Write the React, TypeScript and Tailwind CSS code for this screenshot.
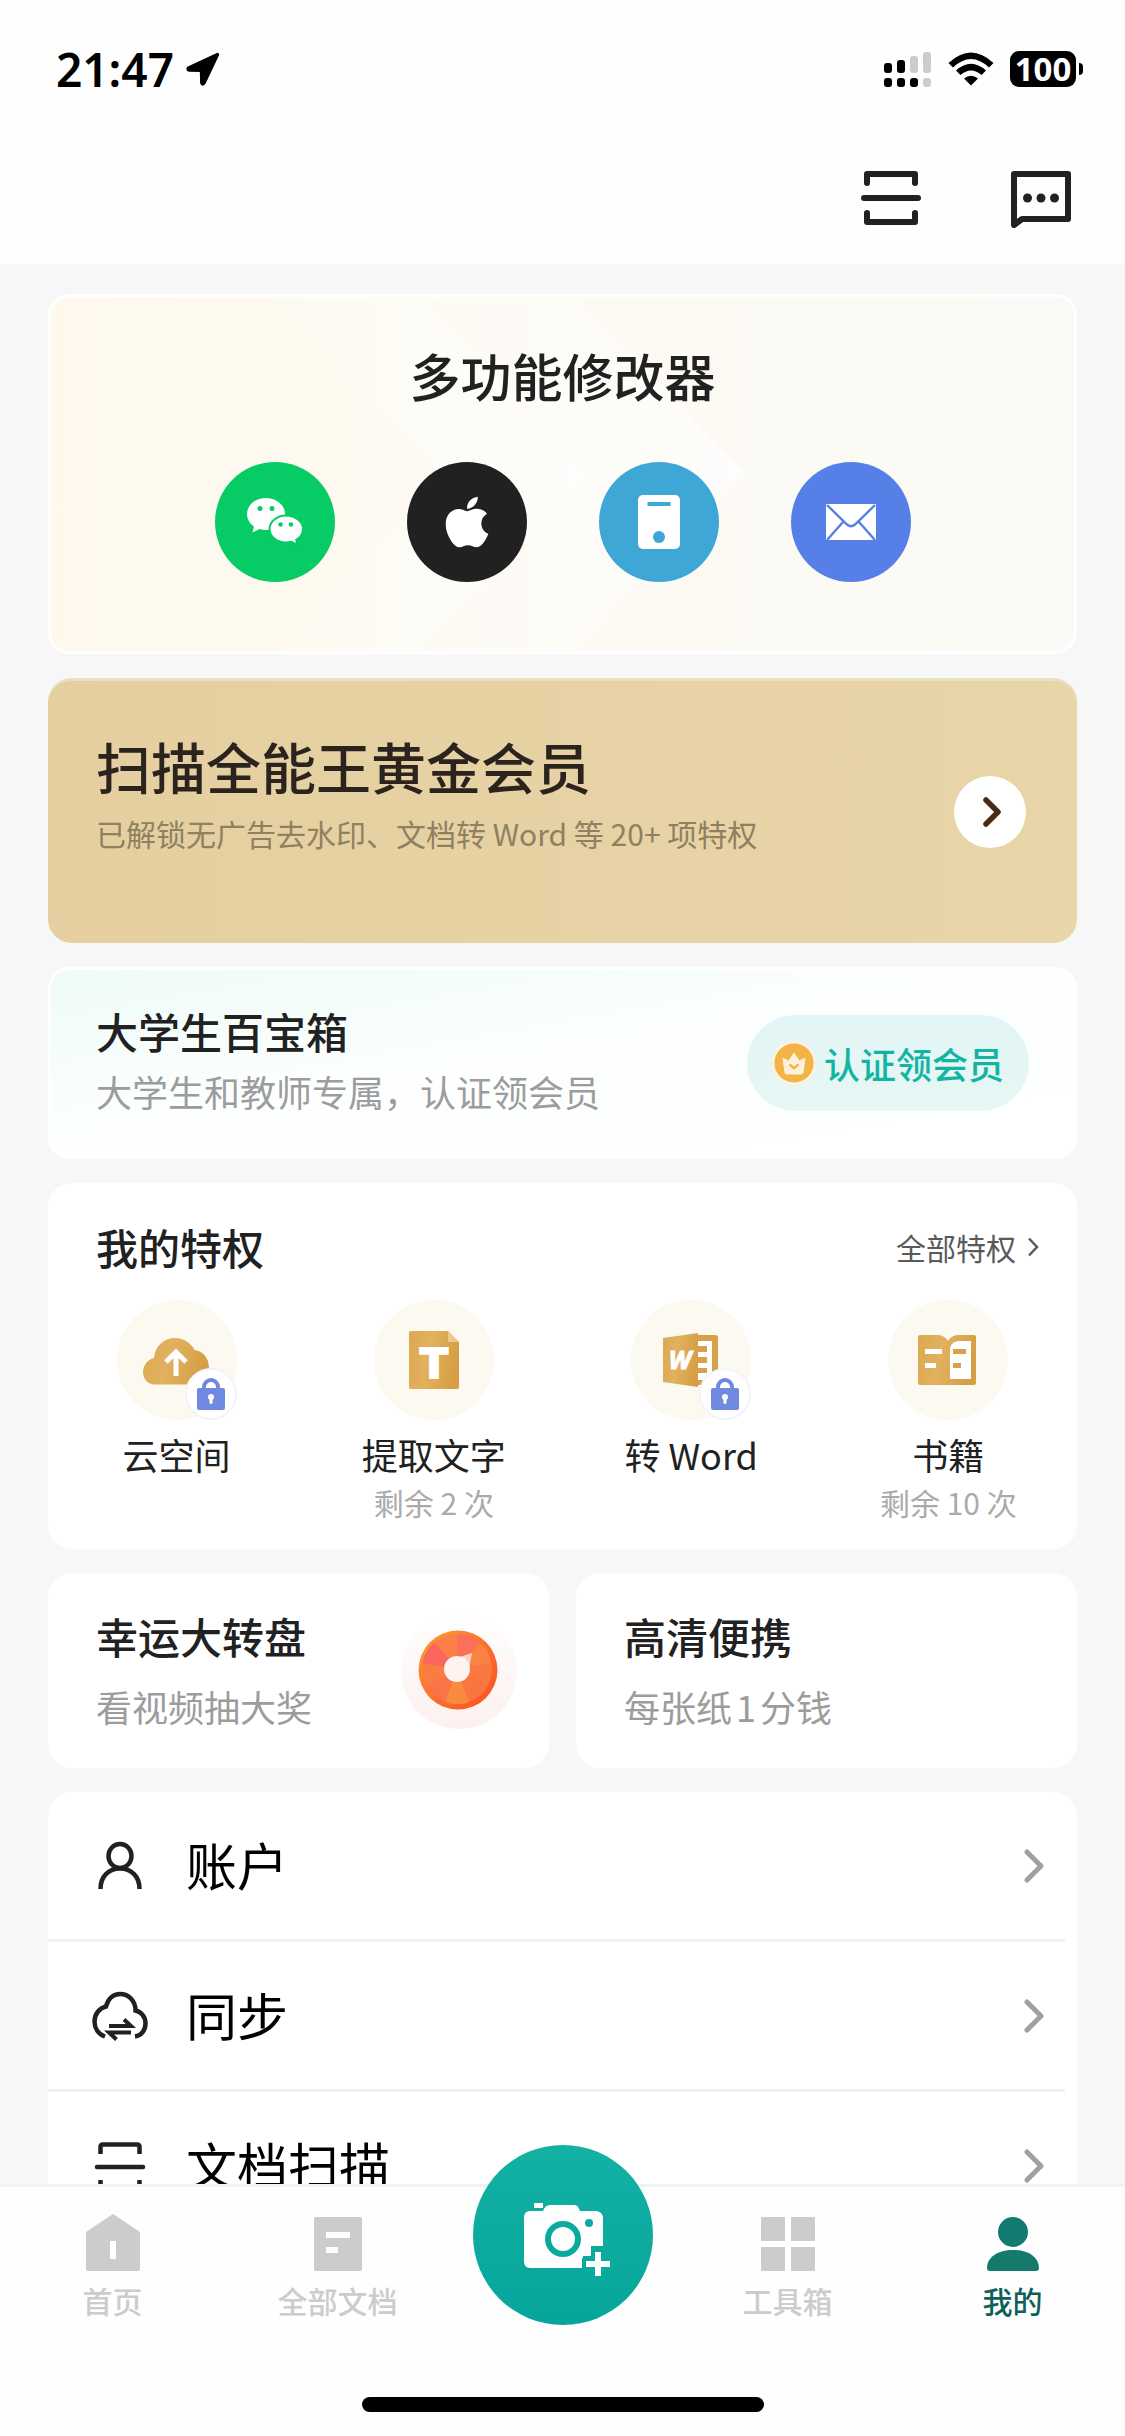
import type { ReactNode } from "react";
import { FaApple } from "react-icons/fa";

function LocationArrow() {
  return (
    <svg viewBox="0 0 36 36" className="h-9 w-9" aria-hidden="true">
      <path
        d="M32.5 3.5 L3.5 17 Q2.5 18.5 4 19 L16.5 19.3 L16.8 32 Q17.8 34 19 32 Z"
        fill="#000"
        stroke="#000"
        strokeWidth="3.4"
        strokeLinejoin="round"
      />
    </svg>
  );
}

function SignalIcon() {
  return (
    <svg viewBox="0 0 48 36" className="h-9 w-12" aria-hidden="true">
      <rect x="0" y="12" width="8" height="10" rx="3" fill="#000" />
      <rect x="13" y="9" width="8" height="13" rx="3" fill="#000" />
      <rect x="26" y="5" width="8" height="17" rx="3" fill="#ccc" />
      <rect x="39" y="1" width="8" height="21" rx="3" fill="#ccc" />
      <rect x="0" y="27" width="8" height="9" rx="3" fill="#000" />
      <rect x="13" y="27" width="8" height="9" rx="3" fill="#000" />
      <rect x="26" y="27" width="8" height="9" rx="3" fill="#000" />
      <rect x="39" y="27" width="8" height="9" rx="3" fill="#ccc" />
    </svg>
  );
}

function WifiIcon() {
  return (
    <svg viewBox="0 0 46 34" className="h-[34px] w-[46px]" aria-hidden="true">
      <path d="M0.5 11 Q23 -10 45.5 11 L41 15.5 Q23 -1.500 5 15.500 Z" fill="#000" />
      <path d="M8 18.500 Q23 5 38 18.500 L33.500 23 Q23 14 12.500 23 Z" fill="#000" />
      <path d="M16 26.500 Q23 21 30 26.500 L23 33.500 Z" fill="#000" />
    </svg>
  );
}

function StatusBar() {
  return (
    <div className="flex h-[138px] items-center justify-between pr-[42px] pl-[56px]">
      <div className="flex items-center gap-[11px]">
        <span className="font-['Noto_Sans'] text-[46px] leading-[46px] font-semibold text-black">21:47</span>
        <LocationArrow />
      </div>
      <div className="flex items-center gap-4">
        <SignalIcon />
        <WifiIcon />
        <div className="flex items-center gap-[3px]">
          <div className="flex h-9 w-[66px] items-center justify-center rounded-[9px] bg-black font-['Noto_Sans'] text-[33px] leading-9 font-bold text-white">
            100
          </div>
          <div className="h-3 w-1 rounded-r-full bg-black" />
        </div>
      </div>
    </div>
  );
}

function ScanIcon() {
  return (
    <svg viewBox="0 0 60 60" className="h-[60px] w-[60px]" fill="none" stroke="#212121" strokeWidth="6" aria-hidden="true">
      <path d="M6 15 V6 H54 V15 M6 45 V54 H54 V45" strokeLinejoin="round" strokeLinecap="round" />
      <path d="M3 30 H57" strokeLinecap="round" />
    </svg>
  );
}

function MessageIcon() {
  return (
    <svg viewBox="0 0 60 60" className="h-[60px] w-[60px]" aria-hidden="true">
      <path
        d="M3 6 H57 V51 H11 L3 57 Z"
        fill="none"
        stroke="#212121"
        strokeWidth="6"
        strokeLinejoin="round"
      />
      <circle cx="16.500" cy="30" r="4.500" fill="#212121" />
      <circle cx="30" cy="30" r="4.500" fill="#212121" />
      <circle cx="43.500" cy="30" r="4.500" fill="#212121" />
    </svg>
  );
}

function WechatIcon() {
  return (
    <svg viewBox="0 0 56 48" className="h-12 w-14" aria-hidden="true">
      <path d="M19 0 C8.500 0 0 7 0 16 C0 21 2.600 25.500 7 28.500 L5.500 34.500 L12.500 31 Q15.500 32 19 32 C29.500 32 38 25 38 16 S29.500 0 19 0 Z" fill="#fff" />
      <path
        d="M39 17.500 C30 17.500 22.500 23.700 22.500 31 C22.500 38.500 30 44.500 39 44.500 Q42 44.500 44.500 43.800 L50.500 47 L49.200 41.800 C53.500 39.300 56 35.500 56 31 C56 23.700 48.300 17.500 39 17.500 Z"
        fill="#fff"
        stroke="#07cb64"
        strokeWidth="2"
      />
      <circle cx="13" cy="10.500" r="2.500" fill="#07cb64" />
      <circle cx="25" cy="10.500" r="2.500" fill="#07cb64" />
      <circle cx="33.500" cy="26.500" r="2.200" fill="#07cb64" />
      <circle cx="44" cy="26.500" r="2.200" fill="#07cb64" />
    </svg>
  );
}

function PhoneIcon() {
  return (
    <svg viewBox="0 0 42 54" className="h-[54px] w-[42px]" aria-hidden="true">
      <rect width="42" height="54" rx="5" fill="#fff" />
      <rect x="9.500" y="7" width="23" height="4" fill="#3fa7d6" />
      <circle cx="21" cy="42" r="6" fill="#3fa7d6" />
    </svg>
  );
}

function MailIcon() {
  return (
    <svg viewBox="0 0 50 36" className="h-9 w-[50px]" aria-hidden="true">
      <rect width="50" height="36" fill="#fff" />
      <path d="M1 1 L21 20.500 Q25 24 29 20.500 L49 1 M1 36 L17 18 M49 36 L33 18" fill="none" stroke="#567fe8" strokeWidth="2.4" />
    </svg>
  );
}

function Contact({ label, className, children }: { label: string; className: string; children: ReactNode }) {
  return (
    <button type="button" aria-label={label} className={`flex h-[120px] w-[120px] items-center justify-center rounded-full text-white ${className}`}>
      {children}
    </button>
  );
}

function FeatureCard() {
  return (
    <section className="relative overflow-hidden rounded-[21px] border-[3px] border-white bg-linear-to-r from-[#fef9ec] via-[#fdfaf3] to-[#fbfaf6] pt-12 pb-[69px]">
      <svg viewBox="0 0 1023 354" preserveAspectRatio="none" className="absolute inset-0 h-full w-full" aria-hidden="true">
        <defs>
          <linearGradient id="ray" x1="0" x2="1" y1="0" y2="0">
            <stop offset="0" stopColor="#fff" stopOpacity="0.1" />
            <stop offset="1" stopColor="#fff" stopOpacity="0.7" />
          </linearGradient>
        </defs>
        <path d="M218 0 H370 L540 177 L370 354 H230 L390 177 Z" fill="url(#ray)" />
        <path d="M370 0 H526 L695 177 L523 354 H372 L540 177 Z" fill="url(#ray)" />
      </svg>
      <div className="relative flex flex-col items-center gap-[57px]">
        <h1 className="text-[51px] leading-[60px] font-medium text-[#212121]">多功能修改器</h1>
        <div className="flex gap-[72px]">
          <Contact label="微信" className="bg-[#07cb64]">
            <WechatIcon />
          </Contact>
          <Contact label="Apple" className="bg-[#212121]">
            <FaApple size={58} />
          </Contact>
          <Contact label="手机" className="bg-[#3fa7d6]">
            <PhoneIcon />
          </Contact>
          <Contact label="邮箱" className="bg-[#567fe8]">
            <MailIcon />
          </Contact>
        </div>
      </div>
    </section>
  );
}

function GoldCard() {
  return (
    <section className="flex items-center justify-between rounded-3xl border-t-[3px] border-[#eadfc4] bg-linear-to-r from-[#e5cfa0] to-[#e8d5a8] pr-[51px] pl-[48px]">
      <div className="flex flex-col gap-4 pt-[52px] pb-[90px]">
        <h2 className="text-[55px] leading-[64px] font-medium text-[#2b231d]">扫描全能王黄金会员</h2>
        <p className="text-[30px] leading-10 text-[#8f8060]">已解锁无广告去水印、文档转 Word 等 20+ 项特权</p>
      </div>
      <button type="button" aria-label="查看会员权益" className="flex h-[72px] w-[72px] items-center justify-center rounded-full bg-white">
        <svg viewBox="0 0 20 32" className="ml-1 h-8 w-5" aria-hidden="true">
          <path d="M4 4 L16 16 L4 28" fill="none" stroke="#4a2a12" strokeWidth="5.500" strokeLinecap="round" strokeLinejoin="round" />
        </svg>
      </button>
    </section>
  );
}

function StudentCard() {
  return (
    <section className="flex items-center justify-between rounded-[21px] border-[3px] border-white bg-linear-170 from-[#eefbf8] via-[#fcfffe] via-45% to-white pr-[45px] pl-[45px]">
      <div className="flex flex-col gap-3 pt-[37px] pb-[41px]">
        <h2 className="text-[42px] leading-[48px] font-medium text-[#212121]">大学生百宝箱</h2>
        <p className="text-[36px] leading-[48px] text-[#9c9c9c]">大学生和教师专属，认证领会员</p>
      </div>
      <button type="button" className="flex h-24 items-center gap-2 rounded-full bg-linear-to-b from-[#e3f5f6] to-[#e6f7f4] px-[25px] text-[36px] leading-[48px] font-medium text-[#13b5a2]">
        <svg viewBox="0 0 46 46" className="h-11 w-11" aria-hidden="true">
          <circle cx="23" cy="23" r="23" fill="#fdf3e0" />
          <circle cx="23" cy="23" r="20.500" fill="#f3b347" />
          <path d="M11.500 18 L17.500 21 L23 12.500 L28.500 21 L34.500 18 L32.500 33 Q32 34.500 30.500 34.500 H15.500 Q14 34.500 13.500 33 Z" fill="#fdf1da" stroke="#fdf1da" strokeLinejoin="round" />
          <path d="M19 25 L23 28.500 L27 25" fill="none" stroke="#f3b347" strokeWidth="2.500" strokeLinecap="round" />
        </svg>
        认证领会员
      </button>
    </section>
  );
}

function GoldGradient({ id }: { id: string }) {
  return (
    <linearGradient id={id} x1="0" x2="1" y1="0" y2="0.2">
      <stop offset="0" stopColor="#dba951" />
      <stop offset="0.45" stopColor="#e2b15f" />
      <stop offset="1" stopColor="#d69f46" />
    </linearGradient>
  );
}

function CloudUpIcon() {
  return (
    <svg viewBox="0 0 120 120" className="h-full w-full" aria-hidden="true">
      <defs>
        <GoldGradient id="gold-cloud" />
      </defs>
      <path d="M38 84.500 C31 84.500 26 79 26 72 C26 65 31 59.500 37 58 C38 46 47 38 58 38 C67 38 74 43 77.500 50 C86 51 92 58 92 68 C92 77 86 84.500 76 84.500 Z" fill="url(#gold-cloud)" />
      <path d="M59 76 V53 M49 62 L59 52 L69 62" fill="none" stroke="#fff" strokeWidth="5" />
    </svg>
  );
}

function TextIcon() {
  return (
    <svg viewBox="0 0 120 120" className="h-full w-full" aria-hidden="true">
      <defs>
        <GoldGradient id="gold-text" />
      </defs>
      <path d="M37 31 H74 L85 42 V87 Q85 89 83 89 H37 Q35 89 35 87 V33 Q35 31 37 31 Z" fill="url(#gold-text)" />
      <path d="M74 31 L85 42 H74 Z" fill="#edc98a" />
      <text x="60" y="78" textAnchor="middle" fontSize="41" fontWeight="700" fill="#fff" stroke="#fff" strokeWidth="2" fontFamily="DejaVu Sans">
        T
      </text>
    </svg>
  );
}

function WordIcon() {
  return (
    <svg viewBox="0 0 120 120" className="h-full w-full" aria-hidden="true">
      <defs>
        <GoldGradient id="gold-word" />
      </defs>
      <path d="M58 35 H84 Q87 35 87 38 V82 Q87 85 84 85 H58 Z" fill="#d6a148" />
      <path d="M66 41 H81 V80 H66 Z" fill="#fff" />
      <path d="M66 46 H76 V52 H66 Z M66 57 H76 V63 H66 Z M66 68 H76 V73 H66 Z" fill="#d6a148" />
      <path d="M32 38 L67 33 V87 L32 82 Z" fill="url(#gold-word)" />
      <text x="49" y="69" textAnchor="middle" fontSize="25" fontWeight="700" fontStyle="italic" fill="#fff" stroke="#fff" fontFamily="Noto Sans">
        W
      </text>
    </svg>
  );
}

function BookIcon() {
  return (
    <svg viewBox="0 0 120 120" className="h-full w-full" aria-hidden="true">
      <defs>
        <GoldGradient id="gold-book" />
      </defs>
      <path d="M32 35 H51 Q57 36 60 41 Q63 36 69 35 H86 Q88 35 88 37 V83 Q88 85 86 85 H32 Q30 85 30 83 V37 Q30 35 32 35 Z" fill="url(#gold-book)" />
      <path d="M83 41 V79 H62 V48 Q64 41 71 41 Z" fill="#fff" />
      <path d="M37 49 H54 V54 H37 Z M37 63 H48 V68 H37 Z" fill="#fff" />
      <path d="M65 49 H78 V54 H65 Z M65 63 H73 V68 H65 Z" fill="#d6a148" />
    </svg>
  );
}

function LockBadge() {
  return (
    <span className="absolute right-0 bottom-0 flex h-[52px] w-[52px] items-center justify-center rounded-full border-2 border-[#f3f4fb] bg-white">
      <svg viewBox="0 0 28 32" className="h-8 w-7" aria-hidden="true">
        <path d="M7 12 V9 A7 7 0 0 1 21 9 V12" fill="none" stroke="#7088df" strokeWidth="4" />
        <rect y="10" width="28" height="22" rx="2" fill="#7088df" />
        <circle cx="14" cy="19" r="3" fill="#fff" />
        <rect x="12.500" y="20" width="3" height="6" rx="1.500" fill="#fff" />
      </svg>
    </span>
  );
}

const privileges = [
  { name: "云空间", note: "", locked: true, icon: <CloudUpIcon /> },
  { name: "提取文字", note: "剩余 2 次", locked: false, icon: <TextIcon /> },
  { name: "转 Word", note: "", locked: true, icon: <WordIcon /> },
  { name: "书籍", note: "剩余 10 次", locked: false, icon: <BookIcon /> },
];

function PrivilegeCard() {
  return (
    <section className="rounded-3xl bg-white pt-10 pb-[27px]">
      <div className="flex items-center justify-between pr-[38px] pl-[48px]">
        <h2 className="text-[42px] leading-[48px] font-medium text-[#212121]">我的特权</h2>
        <a href="#privileges" className="flex items-center gap-[11px] text-[30px] leading-10 text-[#5a5a5a]">
          全部特权
          <svg viewBox="0 0 12 20" className="h-5 w-3" aria-hidden="true">
            <path d="M2 1.500 L10 10 L2 18.500" fill="none" stroke="#5a5a5a" strokeWidth="2.500" />
          </svg>
        </a>
      </div>
      <div className="mt-[29px] grid grid-cols-4">
        {privileges.map((item) => (
          <button type="button" key={item.name} className="flex flex-col items-center">
            <span className="relative block h-[120px] w-[120px] rounded-full bg-[#fbf9f0]">
              {item.icon}
              {item.locked && <LockBadge />}
            </span>
            <span className="mt-[10px] text-[36px] leading-[48px] text-[#212121]">{item.name}</span>
            <span className="mt-1 h-10 text-[30px] leading-10 text-[#aaaaaa]">{item.note}</span>
          </button>
        ))}
      </div>
    </section>
  );
}

const wheelColors = ["#fb705a", "#fa8243", "#f9783f", "#fa7640", "#fa8a3e", "#fb7448", "#fa7c42", "#fb6560", "#fb7f47"];

function WheelIcon() {
  const point = (index: number) => {
    const angle = ((index * 40 - 90) * Math.PI) / 180;
    return `${57 + 35 * Math.cos(angle)} ${57 + 35 * Math.sin(angle)}`;
  };
  return (
    <svg viewBox="0 0 118 118" className="h-[118px] w-[118px]" aria-hidden="true">
      <defs>
        <linearGradient id="rim" x1="0" x2="1" y1="0" y2="1">
          <stop offset="0" stopColor="#f7a52a" />
          <stop offset="0.5" stopColor="#fb7030" />
          <stop offset="1" stopColor="#fa5020" />
        </linearGradient>
        <linearGradient id="halo" x1="0" x2="0" y1="0" y2="1">
          <stop offset="0" stopColor="#fffefe" />
          <stop offset="1" stopColor="#fdf0f0" />
        </linearGradient>
      </defs>
      <circle cx="59" cy="59" r="58" fill="url(#halo)" />
      <circle cx="58" cy="58" r="39.500" fill="url(#rim)" />
      {wheelColors.map((color, index) => (
        <path key={color} d={`M57 57 L${point(index)} A35 35 0 0 1 ${point(index + 1)} Z`} fill={color} />
      ))}
      <path d="M60 45 L72 41 L69 57 Z" fill="#fdd5c8" />
      <circle cx="57" cy="57" r="13" fill="#fdf3f0" />
    </svg>
  );
}

function PromoCards() {
  return (
    <section className="grid grid-cols-2 gap-[27px]">
      <a href="#wheel" className="flex items-center justify-between rounded-3xl bg-white pr-[31px] pl-[48px]">
        <div className="flex flex-col gap-[22px] pt-[39px] pb-[38px]">
          <h2 className="text-[42px] leading-[48px] font-medium text-[#212121]">幸运大转盘</h2>
          <p className="text-[36px] leading-[48px] text-[#9c9c9c]">看视频抽大奖</p>
        </div>
        <WheelIcon />
      </a>
      <a href="#print" className="flex items-center rounded-3xl bg-white pr-8 pl-[48px]">
        <div className="flex flex-col gap-[22px] pt-[39px] pb-[38px]">
          <h2 className="text-[42px] leading-[48px] font-medium text-[#212121]">高清便携</h2>
          <p className="text-[36px] leading-[48px] text-[#9c9c9c]">
            每张纸<span className="mx-1">1</span>分钱
          </p>
        </div>
      </a>
    </section>
  );
}

function RowIcon({ children }: { children: ReactNode }) {
  return (
    <svg viewBox="0 0 56 56" className="h-14 w-14" fill="none" stroke="#212121" strokeWidth="4.500" aria-hidden="true">
      {children}
    </svg>
  );
}

const rows = [
  {
    name: "账户",
    icon: (
      <RowIcon>
        <ellipse cx="28" cy="18" rx="11.500" ry="12" />
        <path d="M8.500 51 C8.500 38 17 30.500 28 30.500 S47.500 38 47.500 51" />
      </RowIcon>
    ),
  },
  {
    name: "同步",
    icon: (
      <RowIcon>
        <path d="M13 48.500 C6 46 2.500 40 2.500 33.500 C2.500 26 7.500 20 14 18.500 C16 11 21 6 28 6 C37 6 43.500 13 43.500 22.500 C49.500 24 53.500 29 53.500 35.500 C53.500 42 49.500 47.500 43 48.500" />
        <path d="M17 38 H39 L32 31.500 M39 44.500 H17 L24.500 51.500" strokeWidth="4" />
      </RowIcon>
    ),
  },
  {
    name: "文档扫描",
    icon: (
      <RowIcon>
        <path d="M8.500 16 V9 Q8.500 6.500 11 6.500 H45 Q47.500 6.500 47.500 9 V16 M8.500 42 V50 H47.500 V42" />
        <path d="M5 29 H51" strokeLinecap="round" />
      </RowIcon>
    ),
  },
];

function SettingsList() {
  return (
    <ul className="rounded-3xl bg-white">
      {rows.map((row) => (
        <li key={row.name} className="mr-3 border-b-[3px] border-[#f0f0f0]">
          <a href={`#${row.name}`} className="flex h-[147px] items-center pr-5 pl-11">
            {row.icon}
            <span className="ml-[38px] flex-1 pb-1 text-[51px] leading-[60px] text-black">{row.name}</span>
            <svg viewBox="0 0 22 34" className="h-[34px] w-[22px]" aria-hidden="true">
              <path d="M4 3 L18 17 L4 31" fill="none" stroke="#a0a0a0" strokeWidth="5" strokeLinecap="round" strokeLinejoin="round" />
            </svg>
          </a>
        </li>
      ))}
    </ul>
  );
}

function Tab({ label, active = false, children }: { label: string; active?: boolean; children: ReactNode }) {
  return (
    <button
      type="button"
      aria-current={active ? "page" : undefined}
      className={`flex flex-col items-center gap-[9px] pt-[27px] text-[30px] leading-10 font-medium ${active ? "text-[#0f5f5b]" : "text-[#cccccc]"}`}
    >
      <svg viewBox="0 0 54 57" className="h-[57px] w-[54px]" aria-hidden="true">
        {children}
      </svg>
      {label}
    </button>
  );
}

function CameraIcon() {
  return (
    <svg viewBox="0 0 180 180" className="h-full w-full" aria-hidden="true">
      <rect x="61" y="58" width="9" height="5" fill="#fff" />
      <path d="M57 66 H70 Q72 60 77 60 H102 Q105 60 107 66 H122 Q130 66 130 74 V101 H118 V111 H110 V123 H57 Q51 123 51 116 V73 Q51 66 57 66 Z" fill="#fff" />
      <circle cx="90" cy="94" r="15" fill="none" stroke="#0baa9e" strokeWidth="6" />
      <circle cx="116" cy="78" r="4" fill="#0baa9e" />
      <path d="M125 103 V135 M109 119 H141" stroke="#0baa9e" strokeWidth="12" />
      <path d="M125 107 V131 M113 119 H137" stroke="#fff" strokeWidth="6" />
    </svg>
  );
}

function TabBar() {
  return (
    <nav className="relative shrink-0 border-t-[3px] border-[#f2f2f2] bg-[#fefefe]">
      <div className="grid h-[210px] grid-cols-5 items-start">
        <Tab label="首页">
          <path d="M27 0 L54 18 V55 Q54 57 52 57 H2 Q0 57 0 55 V18 Z" fill="#ccc" />
          <rect x="24" y="27" width="6" height="18" fill="#fff" />
        </Tab>
        <Tab label="全部文档">
          <rect x="3" y="3" width="48" height="54" rx="2" fill="#ccc" />
          <rect x="15" y="18" width="24" height="6" fill="#fff" />
          <rect x="15" y="33" width="12" height="6" fill="#fff" />
        </Tab>
        <button type="button" aria-label="拍照扫描" className="-mt-[42px] h-[180px] w-[180px] justify-self-center rounded-full bg-linear-to-b from-[#13b1a4] to-[#06a59b]">
          <CameraIcon />
        </button>
        <Tab label="工具箱">
          <path d="M0 3 H24 V27 H0 Z M30 3 H54 V27 H30 Z M0 33 H24 V57 H0 Z M30 33 H54 V57 H30 Z" fill="#ccc" />
        </Tab>
        <Tab label="我的" active>
          <circle cx="27" cy="18" r="15" fill="#137a72" />
          <path d="M1 54 C1 43 12 36 27 36 S53 43 53 54 Q53 57 50 57 H4 Q1 57 1 54 Z" fill="#137a6c" />
        </Tab>
      </div>
      <div className="mx-auto mb-6 h-[15px] w-[402px] rounded-full bg-black" />
    </nav>
  );
}

export default function App() {
  return (
    <div className="flex h-screen flex-col overflow-hidden bg-[#f7f7f7] font-['Noto_Sans_CJK_SC',sans-serif]">
      <header className="shrink-0 bg-[#fefefe]">
        <StatusBar />
        <div className="flex h-[126px] items-start justify-end gap-[90px] pt-[30px] pr-[54px]">
          <button type="button" aria-label="扫一扫" className="h-[60px] w-[60px]">
            <ScanIcon />
          </button>
          <button type="button" aria-label="消息" className="h-[60px] w-[60px]">
            <MessageIcon />
          </button>
        </div>
      </header>
      <main className="flex min-h-0 flex-1 flex-col gap-6 overflow-hidden px-[48px] pt-[30px] *:shrink-0">
        <FeatureCard />
        <GoldCard />
        <StudentCard />
        <PrivilegeCard />
        <PromoCards />
        <SettingsList />
      </main>
      <TabBar />
    </div>
  );
}
